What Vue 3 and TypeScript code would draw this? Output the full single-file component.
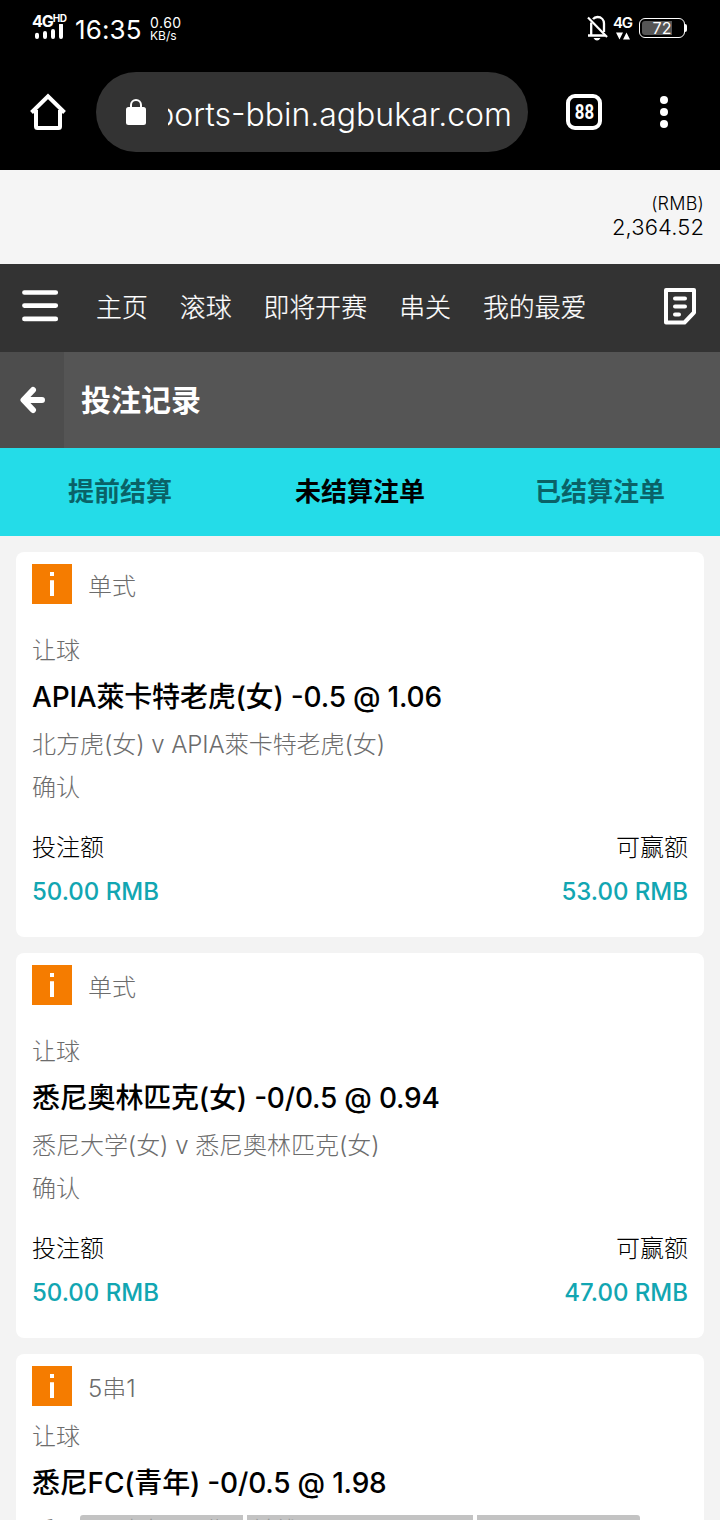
<script setup lang="ts">
interface Bet {
  kind: string
  market: string
  team: string
  line: string
  odds: string
  match: string
  status: string
  stake: string
  win: string
  compact?: boolean
}

const nav: string[] = ['主页', '滚球', '即将开赛', '串关', '我的最爱']
const tabs: string[] = ['提前结算', '未结算注单', '已结算注单']
const activeTab = 1

const bets: Bet[] = [
  { kind: '单式', market: '让球', team: 'APIA萊卡特老虎(女)', line: '-0.5', odds: '1.06', match: '北方虎(女) v APIA萊卡特老虎(女)', status: '确认', stake: '50.00 RMB', win: '53.00 RMB' },
  { kind: '单式', market: '让球', team: '悉尼奧林匹克(女)', line: '-0/0.5', odds: '0.94', match: '悉尼大学(女) v 悉尼奧林匹克(女)', status: '确认', stake: '50.00 RMB', win: '47.00 RMB' },
  { kind: '5串1', market: '让球', team: '悉尼FC(青年)', line: '-0/0.5', odds: '1.98', match: '悉尼FC(青年) v 北野前线', status: '确认', stake: '50.00 RMB', win: '50.00 RMB', compact: true },
]
</script>

<template>
  <main class="screen">
    <header class="status">
      <div class="signal">
        <div class="net">4G<span>HD</span></div>
        <svg width="30" height="16" viewBox="0 0 30 16">
          <path d="M3 10.800V13M11 9V13M19 7V13M27 1V13" stroke="#fff" stroke-width="4" stroke-linecap="round" />
        </svg>
      </div>
      <div class="clock">16:35</div>
      <div class="speed"><div>0.60</div><div class="unit">KB/s</div></div>
      <svg class="bell" width="22" height="26" viewBox="0 0 22 26" fill="none" stroke="#fff">
        <path d="M1 20.500H18M4.200 20V7.500M6 4.200C7.200 2.500 8.500 2 10.500 2C14.500 2 17 5 17 8.500V17" stroke-width="2.300" />
        <path d="M1 2.500L20 22" stroke-width="2.200" />
        <path d="M6.500 23H13.500Q12 25.500 10 25.500T6.500 23Z" fill="#fff" stroke="none" />
      </svg>
      <div class="mobile">
        <div>4G</div>
        <svg width="14" height="8" viewBox="0 0 14 8" fill="#fff"><path d="M0 .5H7L3.500 7.500ZM7 7.500H14L10.500 .5Z" /></svg>
      </div>
      <div class="battery"><div class="cell"><div class="charge"></div><span>72</span></div><i></i></div>
    </header>

    <div class="browser">
      <svg class="home" width="36" height="38" viewBox="0 0 36 38" fill="none" stroke="#fff" stroke-width="4" stroke-linejoin="round">
        <path d="M6 17V33.500Q6 35 7.500 35H28.500Q30 35 30 33.500V17" />
        <path d="M1.500 19.500L18 3.300L34.500 19.500" stroke-linejoin="miter" />
      </svg>
      <div class="address">
        <svg width="20" height="27" viewBox="0 0 20 27">
          <rect y="8" width="20" height="18" rx="2.500" fill="#fff" />
          <path d="M5 9V6A5 5 0 0 1 15 6V9" fill="none" stroke="#fff" stroke-width="2" />
        </svg>
        <div class="url"><span>ports-bbin.agbukar.com</span></div>
      </div>
      <div class="count"><span>88</span></div>
      <div class="dots"><i></i><i></i><i></i></div>
    </div>

    <section class="balance">
      <div class="currency">(RMB)</div>
      <div class="sum">2,364.52</div>
    </section>

    <nav class="nav">
      <svg width="38" height="34" viewBox="0 0 38 34"><path d="M3.400 3.500H34.800M3.400 16.600H34.800M3.400 29.900H34.800" stroke="#fff" stroke-width="4.600" stroke-linecap="round" /></svg>
      <div class="links"><a v-for="item in nav" :key="item">{{ item }}</a></div>
      <svg class="slip" width="32" height="37" viewBox="0 0 32 37" fill="none" stroke="#fff" stroke-width="4">
        <path d="M2 2H30V24.500L20.500 34.500H2Z" stroke-linejoin="round" />
        <path d="M11 10.500H21M11 18.500H21M11 26.500H15" stroke-linecap="round" />
      </svg>
    </nav>

    <div class="title">
      <div class="back">
        <svg width="26" height="28" viewBox="0 0 26 28" fill="none" stroke="#fff" stroke-width="6" stroke-linecap="round" stroke-linejoin="round"><path d="M13 4L3.500 14L13 24M5 14H22" /></svg>
      </div>
      <h1>投注记录</h1>
    </div>

    <div class="tabs">
      <div v-for="(tab, i) in tabs" :key="tab" class="tab" :class="{ active: i === activeTab }">{{ tab }}</div>
    </div>

    <section class="list">
      <article v-for="(bet, i) in bets" :key="i" class="card" :class="{ compact: bet.compact }">
        <div class="kind">
          <div class="info"><svg width="40" height="40" viewBox="0 0 40 40" fill="#fff"><path d="M18 8H22V12H18ZM18 16.200H22V32H18Z" /></svg></div>
          <span>{{ bet.kind }}</span>
        </div>
        <div class="market">{{ bet.market }}</div>
        <h2>{{ bet.team }} <span class="line">{{ bet.line }}</span> @ {{ bet.odds }}</h2>
        <div class="match">{{ bet.match }}</div>
        <div class="state">{{ bet.status }}</div>
        <div class="row labels"><span>投注额</span><span>可赢额</span></div>
        <div class="row money"><span>{{ bet.stake }}</span><span>{{ bet.win }}</span></div>
      </article>
    </section>

    <div class="gestures"><i></i><i></i><i></i></div>
  </main>
</template>

<style>
body { margin: 0; overflow: hidden; }
</style>

<style scoped>
.screen {
  position: relative;
  width: 720px;
  height: 1520px;
  overflow: hidden;
  background: #f3f3f3;
  font-family: Inter, "Noto Sans CJK SC", sans-serif;
  color: #000;
}
svg { display: block; flex: none; }
h1, h2 { margin: 0; }
.status {
  display: flex;
  box-sizing: border-box;
  height: 56px;
  padding: 14px 32px 0 32px;
  background: #000;
  color: #fff;
}
.signal { width: 36px; margin-right: 7px; }
.signal svg { margin: -4px 0 0 2px; }
.net { font-size: 16px; line-height: 15px; font-weight: 700; height: 14px; white-space: nowrap; letter-spacing: -1px; }
.net span { font-size: 10px; vertical-align: 5px; line-height: 1px; letter-spacing: -.5px; }
.clock { width: 71px; font-size: 26px; line-height: 32px; letter-spacing: .1px; }
.speed { margin-left: 4px; font-size: 14px; line-height: 15px; letter-spacing: .5px; padding-top: 1px; }
.unit { font-size: 12px; line-height: 11px; letter-spacing: 0; }
.bell { margin: 1px 0 0 auto; }
.mobile { width: 18px; margin: 2px 8px 0 4px; }
.mobile div { font-size: 15px; line-height: 14px; font-weight: 600; letter-spacing: -1.200px; }
.mobile svg { margin: 2px 0 0 3px; }
.battery { display: flex; align-items: center; height: 20px; margin: 4px 1px 0 0; }
.battery i { width: 2px; height: 8px; background: #fff; border-radius: 0 2px 2px 0; }
.cell { position: relative; box-sizing: border-box; width: 46px; height: 20px; border: 1.500px solid #fff; border-radius: 6px; text-align: center; font-size: 16px; line-height: 18px; }
.cell span { position: relative; }
.charge { position: absolute; left: 2px; top: 2px; width: 30px; height: 14px; background: #555; border-radius: 3px 0 0 3px; }
.browser { display: flex; align-items: center; height: 112px; padding: 0 30px; background: #000; border-bottom: 2px solid #000; }
.address { display: flex; align-items: center; box-sizing: border-box; width: 432px; height: 80px; margin-left: 30px; padding: 0 16px 0 30px; border-radius: 40px; background: #333; color: #fff; }
.url { display: flex; justify-content: flex-end; width: 344px; margin-left: 22px; overflow: hidden; font-size: 32px; font-weight: 300; line-height: 48px; white-space: nowrap; padding-top: 5px; font-feature-settings: "case"; }
.count { box-sizing: border-box; display: flex; align-items: center; justify-content: center; width: 36px; height: 36px; margin-left: 38px; border: 4px solid #fff; border-radius: 9px; color: #fff; font: 700 20px/28px Roboto, sans-serif; }
.count span { transform: scaleX(.84); }
.dots { display: flex; flex-direction: column; gap: 4px; margin-left: 58px; }
.dots i { width: 8px; height: 8px; border-radius: 50%; background: #fff; }
.balance { box-sizing: border-box; height: 94px; padding: 22px 16px 0; background: #f5f5f5; text-align: right; font-weight: 300; }
.currency { font-size: 18px; line-height: 24px; letter-spacing: .2px; }
.sum { font-size: 22px; line-height: 22px; letter-spacing: .1px; }
.nav { display: flex; align-items: center; box-sizing: border-box; height: 88px; padding: 0 24px 4px 21px; background: #333; color: #fff; }
.links { display: flex; gap: 32px; margin-left: 37px; font-size: 25.900px; font-weight: 300; line-height: 40px; padding-top: 4px; white-space: nowrap; -webkit-text-stroke: .2px #fff; }
.slip { margin-left: auto; }
.title { display: flex; height: 96px; background: #555; color: #fff; }
.back { display: flex; align-items: center; width: 64px; box-sizing: border-box; padding-left: 20px; background: #4d4d4d; }
h1 { padding-left: 17px; font-size: 30px; line-height: 96px; font-weight: 700; }
.tabs { display: flex; height: 88px; background: #24dce8; }
.tab { width: 240px; text-align: center; font-size: 26px; line-height: 87px; font-weight: 700; color: #0a6267; }
.active { color: #000; }
.list { display: flex; flex-direction: column; gap: 16px; padding: 16px; }
.card { box-sizing: border-box; height: 385px; padding: 11.500px 16px 24px; border-radius: 8px; background: #fff; color: #6c6c6c; font-size: 24px; font-weight: 300; white-space: nowrap; }
.kind { display: flex; gap: 16px; height: 40px; line-height: 45px; margin-bottom: 27.500px; }
.compact .kind { margin-bottom: 11.500px; }
.info { height: 40px; background: #f57c00; }
.market { line-height: 40px; }
h2 { color: #000; font-size: 28px; line-height: 52px; font-weight: 500; letter-spacing: -.2px; }
.line { font-feature-settings: "case"; }
.match { line-height: 43px; letter-spacing: -.04px; }
.state { line-height: 44px; }
.row { display: flex; justify-content: space-between; line-height: 44px; color: #000; }
.labels { margin-top: 16px; }
.money { color: #12a6b2; font-weight: 500; font-size: 24px; }
.gestures { position: absolute; left: 80px; bottom: 0; display: flex; gap: 4px; width: 560px; height: 5px; }
.gestures i { width: 163px; background: rgba(170, 170, 170, .7); }
.gestures i:nth-child(2) { flex: 1; }
.gestures i:first-child { border-radius: 3px 0 0 0; }
.gestures i:last-child { border-radius: 0 3px 0 0; }
</style>
